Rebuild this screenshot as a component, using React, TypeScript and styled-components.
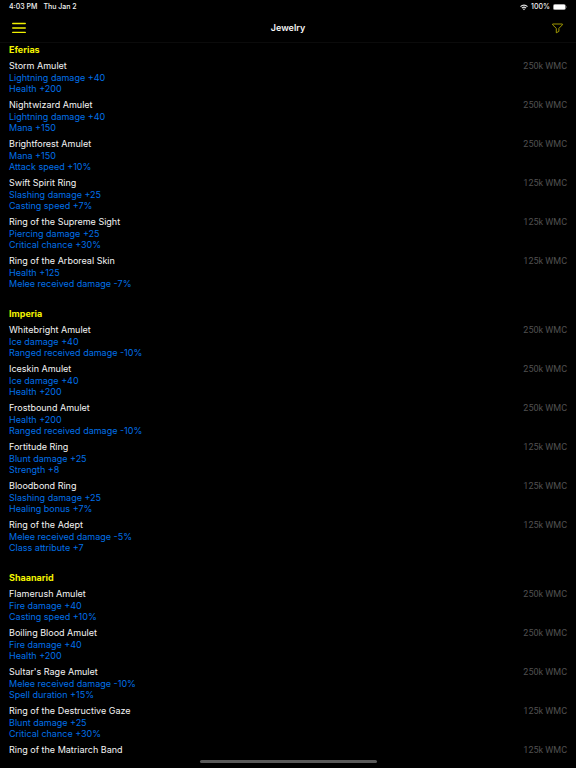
import React from "react";
import styled, { createGlobalStyle } from "styled-components";

const GlobalStyle = createGlobalStyle`
  * { box-sizing: border-box; }
  body {
    margin: 0;
    background: #000;
    font-family: Inter, "Liberation Sans", sans-serif;
  }
`;

const Screen = styled.div`
  display: flex;
  flex-direction: column;
  height: 100vh;
  background: #000;
  color: #f4f4f4;
`;

const StatusBar = styled.div`
  display: flex;
  justify-content: space-between;
  align-items: center;
  height: 14px;
  padding: 0 9px;
  font-size: 7px;
  line-height: 10px;
  font-weight: 500;
`;

const StatusGroup = styled.div<{ $gap: number }>`
  display: flex;
  align-items: center;
  gap: ${(p) => p.$gap}px;
`;

const NavBar = styled.header`
  display: grid;
  grid-template-columns: 1fr auto 1fr;
  align-items: center;
  height: 29px;
  padding: 0 12px;
  border-bottom: 1px solid #0b0b0b;
`;

const Title = styled.h1`
  margin: 0;
  font-size: 9px;
  line-height: 12px;
  font-weight: 600;
`;

const IconButton = styled.button<{ $align: "start" | "end" }>`
  display: flex;
  justify-self: ${(p) => p.$align};
  padding: 0;
  border: 0;
  background: none;
  color: #f0f000;
  cursor: pointer;
`;

const Catalog = styled.main`
  flex: 1;
  min-height: 0;
  overflow-y: auto;
  scrollbar-width: none;
`;

const Section = styled.section`
  padding: 1px 9px 13px;
`;

const SectionTitle = styled.h2`
  margin: 0 0 4px;
  font-size: 9px;
  line-height: 12px;
  font-weight: 700;
  color: #f4f400;
`;

const ItemList = styled.ul`
  margin: 0;
  padding: 0;
  list-style: none;
`;

const Item = styled.li`
  display: flex;
  justify-content: space-between;
  align-items: flex-start;
  padding-bottom: 5px;
`;

const ItemName = styled.h3`
  margin: 0;
  font-size: 9px;
  line-height: 12px;
  font-weight: 400;
`;

const Stat = styled.p`
  margin: 0;
  font-size: 9px;
  line-height: 11px;
  color: #0070e8;
`;

const Price = styled.span`
  font-family: Roboto, "Liberation Sans", sans-serif;
  font-size: 9px;
  line-height: 12px;
  color: #505050;
`;

const HomeArea = styled.footer`
  display: flex;
  justify-content: center;
  align-items: center;
  height: 13px;
`;

const HomeIndicator = styled.div`
  width: 177px;
  height: 3px;
  border-radius: 2px;
  background: #5a5a5a;
`;

type Jewel = { name: string; price: string; stats: string[] };
type Group = { title: string; items: Jewel[] };

const amulet = (name: string, ...stats: string[]): Jewel => ({ name, price: "250k WMC", stats });
const ring = (name: string, ...stats: string[]): Jewel => ({ name, price: "125k WMC", stats });

const groups: Group[] = [
  {
    title: "Eferias",
    items: [
      amulet("Storm Amulet", "Lightning damage +40", "Health +200"),
      amulet("Nightwizard Amulet", "Lightning damage +40", "Mana +150"),
      amulet("Brightforest Amulet", "Mana +150", "Attack speed +10%"),
      ring("Swift Spirit Ring", "Slashing damage +25", "Casting speed +7%"),
      ring("Ring of the Supreme Sight", "Piercing damage +25", "Critical chance +30%"),
      ring("Ring of the Arboreal Skin", "Health +125", "Melee received damage -7%"),
    ],
  },
  {
    title: "Imperia",
    items: [
      amulet("Whitebright Amulet", "Ice damage +40", "Ranged received damage -10%"),
      amulet("Iceskin Amulet", "Ice damage +40", "Health +200"),
      amulet("Frostbound Amulet", "Health +200", "Ranged received damage -10%"),
      ring("Fortitude Ring", "Blunt damage +25", "Strength +8"),
      ring("Bloodbond Ring", "Slashing damage +25", "Healing bonus +7%"),
      ring("Ring of the Adept", "Melee received damage -5%", "Class attribute +7"),
    ],
  },
  {
    title: "Shaanarid",
    items: [
      amulet("Flamerush Amulet", "Fire damage +40", "Casting speed +10%"),
      amulet("Boiling Blood Amulet", "Fire damage +40", "Health +200"),
      amulet("Sultar's Rage Amulet", "Melee received damage -10%", "Spell duration +15%"),
      ring("Ring of the Destructive Gaze", "Blunt damage +25", "Critical chance +30%"),
      ring("Ring of the Matriarch Band"),
    ],
  },
];

const MenuIcon = () => (
  <svg width="14" height="12" viewBox="0 0 14 12" fill="none" stroke="currentColor" strokeWidth="1.3" strokeLinecap="round" aria-hidden="true">
    <path d="M.7 1.5h12.6M.7 6h12.6M.7 10.4h12.6" />
  </svg>
);

const FilterIcon = () => (
  <svg width="12" height="11" viewBox="0 0 12 11" fill="none" stroke="#b0a800" strokeWidth="0.9" strokeLinejoin="round" aria-hidden="true">
    <path d="M.6 1h9.8v.8L6.9 5.4v3L4.3 9.8V5.4L.6 1.8z" />
  </svg>
);

const WifiIcon = () => (
  <svg width="8" height="7" viewBox="0 0 8 7" fill="none" stroke="#e6e6e6" strokeWidth="1.1" aria-hidden="true">
    <path d="M.5 2.6a5 5 0 0 1 7 0M1.9 4.1a3 3 0 0 1 4.2 0" />
    <path d="M4 6.3 2.9 5.1a1.6 1.6 0 0 1 2.2 0z" fill="#e6e6e6" stroke="none" />
  </svg>
);

const BatteryIcon = () => (
  <svg width="14" height="6" viewBox="0 0 14 6" aria-hidden="true">
    <rect x=".3" y=".2" width="12.2" height="5.6" rx="1.6" fill="#fff" stroke="#777" strokeWidth=".5" />
    <path d="M13 2v2q.8-.3.8-1t-.8-1" fill="#777" />
  </svg>
);

export default function App() {
  return (
    <Screen>
      <GlobalStyle />
      <StatusBar>
        <StatusGroup $gap={6}>
          <span>4:03 PM</span>
          <span>Thu Jan 2</span>
        </StatusGroup>
        <StatusGroup $gap={3}>
          <WifiIcon />
          <span>100%</span>
          <BatteryIcon />
        </StatusGroup>
      </StatusBar>
      <NavBar>
        <IconButton $align="start" aria-label="Menu">
          <MenuIcon />
        </IconButton>
        <Title>Jewelry</Title>
        <IconButton $align="end" aria-label="Filter">
          <FilterIcon />
        </IconButton>
      </NavBar>
      <Catalog>
        {groups.map((group) => (
          <Section key={group.title}>
            <SectionTitle>{group.title}</SectionTitle>
            <ItemList>
              {group.items.map((item) => (
                <Item key={item.name}>
                  <div>
                    <ItemName>{item.name}</ItemName>
                    {item.stats.map((stat) => (
                      <Stat key={stat}>{stat}</Stat>
                    ))}
                  </div>
                  <Price>{item.price}</Price>
                </Item>
              ))}
            </ItemList>
          </Section>
        ))}
      </Catalog>
      <HomeArea>
        <HomeIndicator />
      </HomeArea>
    </Screen>
  );
}
